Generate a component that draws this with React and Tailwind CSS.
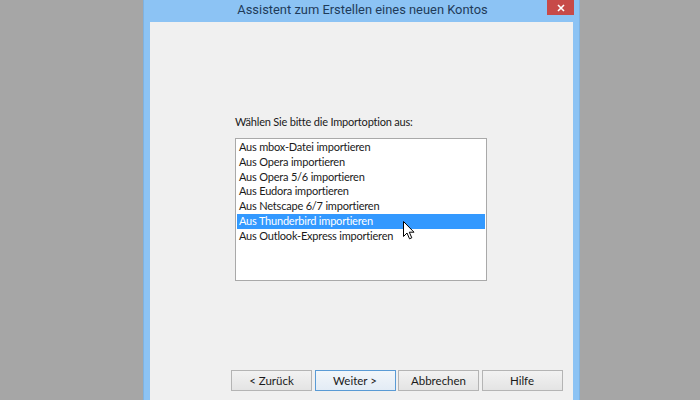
import React from 'react'

const options = [
  'Aus mbox-Datei importieren',
  'Aus Opera importieren',
  'Aus Opera 5/6 importieren',
  'Aus Eudora importieren',
  'Aus Netscape 6/7 importieren',
  'Aus Thunderbird importieren',
  'Aus Outlook-Express importieren',
]

function WizButton({ children, primary }) {
  return (
    <button
      className={`w-[81px] h-[21px] text-[11.5px] leading-[19px] text-[#1a1a1a] border bg-gradient-to-b ${
        primary
          ? 'border-[#5a9bd5] from-[#f2f6fa] to-[#e3ecf5]'
          : 'border-[#b4b4b4] from-[#f2f2f2] to-[#e4e4e4]'
      }`}
    >
      {children}
    </button>
  )
}

function Cursor() {
  return (
    <svg width="12" height="19" viewBox="0 0 12 19" className="absolute left-[403px] top-[221px]">
      <path d="M0.5 0.5 L0.5 15.5 L4 12 L6.5 17.8 L8.8 16.8 L6.3 11.2 L11 11.2 Z" fill="#fff" stroke="#000" strokeWidth="1" strokeLinejoin="round" />
    </svg>
  )
}

export default function App() {
  return (
    <div className="relative w-[700px] h-[400px] overflow-hidden flex bg-[#a6a6a6] font-['Lato','Open_Sans',sans-serif]">
      <div className="w-[143px] shrink-0" />

      {/* window */}
      <div className="w-[437px] shrink-0 flex flex-col bg-[#8cc3f4] border-l border-r border-[#7fb2e0]">
        <div className="h-[22px] shrink-0 flex items-start relative">
          <div className="flex-1 text-center text-[12.9px] leading-[20px] text-[#1f3b5a] font-['Roboto','Open_Sans',sans-serif] pl-[2px]">
            Assistent zum Erstellen eines neuen Kontos
          </div>
          <div className="absolute right-[5px] top-0 w-[27px] h-[15px] bg-[#c74a48] flex items-center justify-center">
            <svg width="8" height="8" viewBox="0 0 8 8">
              <path d="M1 1 L7 7 M7 1 L1 7" stroke="#fff" strokeWidth="1.6" />
            </svg>
          </div>
        </div>

        <div className="flex-1 mx-[6px] bg-[#f0f0f0] flex flex-col">
          <div className="pl-[85px] pt-[92px] text-[11px] tracking-[-0.2px]">
            <div className="leading-[15px] text-[#1a1a1a]">
              Wählen Sie bitte die Importoption aus:
            </div>
            <div className="mt-[9px] w-[252px] h-[143px] bg-white border border-[#a9a9a9] p-[1px]">
              {options.map((o, i) => (
                <div
                  key={o}
                  className={`h-[14.8px] leading-[14.8px] pl-[2px] whitespace-nowrap ${
                    i === 5 ? 'bg-[#3399ff] text-white' : 'text-[#1a1a1a]'
                  }`}
                >
                  {o}
                </div>
              ))}
            </div>
          </div>

          <div className="mt-[89px] pl-[81px] flex gap-[2.5px]">
            <WizButton>&lt; Zurück</WizButton>
            <WizButton primary>Weiter &gt;</WizButton>
            <WizButton>Abbrechen</WizButton>
            <WizButton>Hilfe</WizButton>
          </div>
        </div>
      </div>

      <div className="flex-1" />
      <Cursor />
    </div>
  )
}
